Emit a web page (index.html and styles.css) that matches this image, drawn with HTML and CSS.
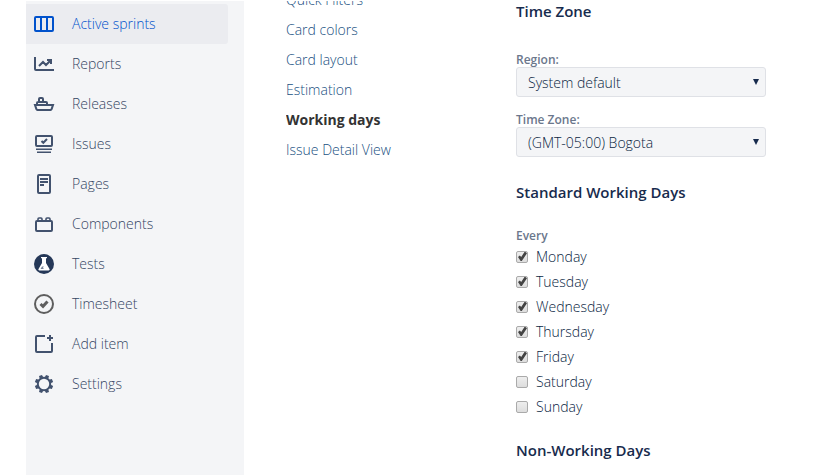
FILE: index.html
```html
<!DOCTYPE html>
<html lang="en">
<head>
    <meta charset="UTF-8">
    <meta name="viewport" content="width=device-width, initial-scale=1.0">
    <title>Working days</title>
    <link rel="stylesheet" href="styles.css">
</head>
<body>
    <div class="page">
        <nav class="sidebar" aria-label="Project">
            <a class="side-item active" href="#">
                <svg viewBox="0 0 24 24"><rect x="3" y="5" width="18" height="14" rx="1"/><path d="M9 5v14M15 5v14"/></svg>
                Active sprints
            </a>
            <a class="side-item" href="#">
                <svg viewBox="0 0 24 24"><path d="M3 5v12a1 1 0 0 0 1 1h18"/><path d="M7 14l4-4 3 3 5-5M15 8h4v4"/></svg>
                Reports
            </a>
            <a class="side-item" href="#">
                <svg viewBox="0 0 24 24"><path d="M3 13h18l-1.500 4.300a1 1 0 0 1-1 .7H5.500a1 1 0 0 1-1-.7z"/><path d="M5 13v-2a1 1 0 0 1 1-1h8a1 1 0 0 1 1 1v2M7 10V7a1 1 0 0 1 1-1h2a1 1 0 0 1 1 1v3"/></svg>
                Releases
            </a>
            <a class="side-item" href="#">
                <svg viewBox="0 0 24 24"><rect x="4" y="4" width="16" height="10" rx="1"/><path d="M9.500 9l1.800 1.800L15 7"/><path class="thin" d="M4 17.200h16M5 20.200h14"/></svg>
                Issues
            </a>
            <a class="side-item" href="#">
                <svg viewBox="0 0 24 24"><rect x="6" y="3" width="12" height="18" rx="1"/><path d="M8 7h8M8 10h8M8 13h4"/></svg>
                Pages
            </a>
            <a class="side-item" href="#">
                <svg viewBox="0 0 24 24"><rect x="4" y="9" width="16" height="10" rx="1"/><path class="thin" d="M6 9V7a1 1 0 0 1 1-1h2a1 1 0 0 1 1 1v2M14 9V7a1 1 0 0 1 1-1h2a1 1 0 0 1 1 1v2"/></svg>
                Components
            </a>
            <a class="side-item" href="#">
                <svg class="solid" viewBox="0 0 24 24"><circle class="disc" cx="12" cy="12" r="10"/><path class="flask" d="M9 5h6v1.200h-1V11l3.500 6a1 1 0 0 1-1 1.500h-9a1 1 0 0 1-1-1.500L10 11V6.200H9z"/><path class="liquid" d="M8.500 17l1.500-2.500h2l-1 1 .8 1.500z"/></svg>
                Tests
            </a>
            <a class="side-item" href="#">
                <svg class="grey" viewBox="0 0 24 24"><circle cx="12" cy="12" r="9"/><path class="thick" d="M8.500 12l2.500 2.300 4.500-4.800"/></svg>
                Timesheet
            </a>
            <a class="side-item" href="#">
                <svg viewBox="0 0 24 24"><path d="M13 4H5a1 1 0 0 0-1 1v14a1 1 0 0 0 1 1h14a1 1 0 0 0 1-1v-8"/><path d="M18 3v6M15 6h6"/></svg>
                Add item
            </a>
            <a class="side-item" href="#">
                <svg viewBox="0 0 24 24"><circle cx="12" cy="12" r="6.200"/><g class="teeth" transform="rotate(22.500 12 12)"><path id="tooth" d="M10 6l.4-3.200h3.200l.4 3.200zM10 18l.4 3.200h3.200l.4-3.200z"/><use href="#tooth" transform="rotate(45 12 12)"/><use href="#tooth" transform="rotate(90 12 12)"/><use href="#tooth" transform="rotate(135 12 12)"/></g></svg>
                Settings
            </a>
        </nav>

        <nav class="subnav" aria-label="Board settings">
            <a href="#">Quick Filters</a>
            <a href="#">Card colors</a>
            <a href="#">Card layout</a>
            <a href="#">Estimation</a>
            <a class="current" href="#" aria-current="page">Working days</a>
            <a href="#">Issue Detail View</a>
        </nav>

        <main class="content">
            <section>
                <h2>Time Zone</h2>
                <div class="field">
                    <label for="region">Region:</label>
                    <div class="select-box">
                        <select id="region">
                            <option>System default</option>
                        </select>
                    </div>
                </div>
                <div class="field">
                    <label for="timezone">Time Zone:</label>
                    <div class="select-box">
                        <select id="timezone">
                            <option>(GMT-05:00) Bogota</option>
                        </select>
                    </div>
                </div>
            </section>

            <section>
                <h2>Standard Working Days</h2>
                <fieldset>
                    <legend>Every</legend>
                    <label class="day"><input type="checkbox" checked>Monday</label>
                    <label class="day"><input type="checkbox" checked>Tuesday</label>
                    <label class="day"><input type="checkbox" checked>Wednesday</label>
                    <label class="day"><input type="checkbox" checked>Thursday</label>
                    <label class="day"><input type="checkbox" checked>Friday</label>
                    <label class="day"><input type="checkbox">Saturday</label>
                    <label class="day"><input type="checkbox">Sunday</label>
                </fieldset>
            </section>

            <section>
                <h2>Non-Working Days</h2>
            </section>
        </main>
    </div>
</body>
</html>
```

FILE: styles.css
```css
:root {
    --text: #172b4d;
    --heading: #172b4d;
    --muted: #6b778c;
    --side-text: #344563;
    --side-icon: #42526e;
    --side-bg: #f4f5f7;
    --link: #205081;
    --active: #0052cc;
}

* {
    margin: 0;
    padding: 0;
    box-sizing: border-box;
}

body {
    background: white;
    color: #091e42;
    font-family: "Segoe UI", "Open Sans", "Noto Sans", sans-serif;
    font-size: 14px;
    font-weight: 300;
    line-height: 20px;
}

a {
    text-decoration: none;
}

.page {
    display: grid;
    grid-template-columns: 218px 188px 1fr;
    column-gap: 42px;
    height: 100vh;
    padding: 1px 0 0 26px;
    overflow: hidden;
}

/* Project sidebar */
.sidebar {
    padding: 3px 16px 0 0;
    background: var(--side-bg);
}

.side-item {
    display: flex;
    align-items: center;
    gap: 16px;
    height: 40px;
    padding-left: 6px;
    border-radius: 0 3px 3px 0;
    color: var(--side-text);
}

.side-item.active {
    background: #ebecf0;
    color: var(--active);
}

.side-item svg {
    width: 24px;
    height: 24px;
    color: var(--side-icon);
    fill: none;
    stroke: currentColor;
    stroke-width: 2;
}

.side-item.active svg {
    color: var(--active);
}

.side-item .solid {
    stroke: none;
}

.disc {
    fill: #253858;
}

.flask {
    fill: white;
}

.liquid {
    fill: #7a869a;
}

.side-item .grey {
    stroke: #5e5e5e;
}

.thin {
    stroke-width: 1.6;
}

.thick {
    stroke-width: 3;
}

.teeth {
    fill: currentColor;
    stroke: none;
}

/* Board settings menu, scrolled so its first link is cut off */
.subnav {
    overflow: hidden;
}

.subnav a {
    display: block;
    line-height: 30px;
    color: var(--link);
}

.subnav a:first-child {
    margin-top: -16px;
}

.subnav .current {
    color: #333;
    font-weight: 700;
}

/* Settings form */
.content {
    display: flex;
    flex-direction: column;
    gap: 25px;
}

h2 {
    margin-bottom: 31px;
    color: var(--heading);
    font-size: 15px;
    font-weight: 600;
    line-height: 20px;
}

.field {
    max-width: 250px;
}

.field + .field {
    margin-top: 15px;
}

.field label,
legend {
    display: block;
    color: var(--muted);
    font-size: 12px;
    font-weight: 600;
    line-height: 15px;
}

.select-box {
    position: relative;
}

.select-box::after {
    content: "";
    position: absolute;
    top: 12px;
    right: 7px;
    border: solid transparent;
    border-width: 6px 3px 0;
    border-top-color: var(--text);
    pointer-events: none;
}

select {
    display: block;
    width: 100%;
    height: 30px;
    padding: 2px 24px 0 11px;
    border: 1px solid #dfe1e6;
    border-radius: 3px;
    background: var(--side-bg);
    color: inherit;
    font: inherit;
    appearance: none;
}

fieldset {
    margin: -5px 0 -4px;
    border: none;
}

.day {
    display: flex;
    align-items: center;
    gap: 8px;
    height: 25px;
}

legend + .day {
    margin-top: 1px;
}

.day input {
    width: 12px;
    height: 12px;
    border: 1px solid #aaa;
    border-radius: 2px;
    background: linear-gradient(#eee, #ddd);
    appearance: none;
}

.day input:checked::before {
    content: "";
    display: block;
    height: 10px;
    background: #444;
    clip-path: polygon(10% 55%, 28% 40%, 42% 55%, 78% 0, 100% 18%, 48% 95%, 36% 95%);
}
```
